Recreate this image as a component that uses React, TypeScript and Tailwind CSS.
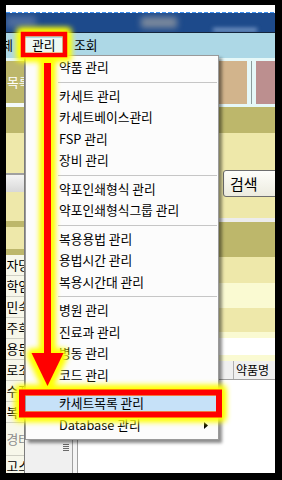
import React from "react";

const menuItems: (string | null)[] = [
  "약품 관리",
  null,
  "카세트 관리",
  "카세트베이스관리",
  "FSP 관리",
  "장비 관리",
  null,
  "약포인쇄형식 관리",
  "약포인쇄형식그룹 관리",
  null,
  "복용용법 관리",
  "용법시간 관리",
  "복용시간대 관리",
  null,
  "병원 관리",
  "진료과 관리",
  "병동 관리",
  "코드 관리",
  null,
  "카세트목록 관리",
  "Database 관리",
];

const nameRows = ["자당", "학임", "민숙", "주희", "용둔", "로조", "수진", "복구"];

function Overlay() {
  const shapes = (fill: string, stroke: string) => (
    <>
      <rect x="23" y="34" width="42" height="21" fill="none" stroke={stroke} strokeWidth="4.5" />
      <rect x="44" y="63" width="7" height="292" fill={fill} />
      <polygon points="31.5,353 63.5,353 47.5,386" fill={fill} />
      <rect x="22" y="392.5" width="197" height="22" fill="none" stroke={stroke} strokeWidth="6" />
    </>
  );
  return (
    <svg
      className="absolute left-0 top-0 pointer-events-none"
      width="282"
      height="480"
      viewBox="0 0 282 480"
    >
      <defs>
        <filter id="glow" filterUnits="userSpaceOnUse" x="0" y="0" width="282" height="480">
          <feMorphology in="SourceAlpha" operator="dilate" radius="2.5" result="d" />
          <feGaussianBlur in="d" stdDeviation="3" result="b" />
          <feFlood floodColor="#ffff00" />
          <feComposite in2="b" operator="in" result="y" />
          <feMerge>
            <feMergeNode in="y" />
            <feMergeNode in="y" />
          </feMerge>
        </filter>
        <clipPath id="outside">
          <path
            clipRule="evenodd"
            d="M0 0H282V480H0Z M25.25 36.25H62.75V52.75H25.25Z M25 395.5H216V411.5H25Z"
          />
        </clipPath>
      </defs>
      <g clipPath="url(#outside)">
        <g filter="url(#glow)">{shapes("#ff0000", "#ff0000")}</g>
      </g>
      <g>{shapes("#ff0000", "#ff0000")}</g>
    </svg>
  );
}

function Menu() {
  return (
    <div className="absolute left-[25px] top-[55px] w-[194px] border border-[#9a9a9a] bg-[#fcfcfc] pt-[1px] pb-[3px] shadow-[3px_3px_3px_rgba(0,0,0,0.45)]">
      {menuItems.map((it, i) =>
        it === null ? (
          <div key={i} className="h-[7px] flex items-center pl-[32px] pr-[1px]">
            <div className="h-px w-full bg-[#c6c6c6]" />
          </div>
        ) : (
          <div
            key={i}
            className={
              "h-[21.5px] flex items-center pl-[33px] whitespace-nowrap " +
              (it === "카세트목록 관리" ? "bg-[#c6e1f8]" : "")
            }
          >
            <span>{it}</span>
            {it === "Database 관리" && (
              <svg className="ml-auto mr-[10px]" width="4" height="7" viewBox="0 0 4 7">
                <polygon points="0,0 4,3.5 0,7" fill="#000" />
              </svg>
            )}
          </div>
        )
      )}
    </div>
  );
}

export default function App() {
  return (
    <div className="relative w-[282px] h-[480px] bg-black pt-[5px] pl-[6px] pr-[7px] pb-[7px] font-[family-name:'Noto_Sans_CJK_KR','Noto_Sans',sans-serif] text-[12.75px] leading-none text-black">
      <div className="flex flex-col w-full h-full overflow-hidden bg-white">
        {/* top strip */}
        <div className="h-[7px] bg-white shrink-0" />
        <div className="h-px shrink-0 bg-[repeating-linear-gradient(90deg,#3a8ef0_0px,#3a8ef0_4px,#ffffff_4px,#ffffff_6px)]" />
        <div className="relative h-[19px] shrink-0 bg-[#1d4a8b] overflow-hidden">
          <div className="absolute left-0 top-[3px] w-[30px] h-[12px] bg-[#4d6c9e] blur-[3px]" />
          <div className="absolute left-[135px] top-[4px] w-[36px] h-[11px] bg-[#7a889c] blur-[3px]" />
          <div className="absolute left-[207px] top-[15px] w-[44px] h-[4px] bg-[#7c9bc8] blur-[2px]" />
        </div>
        <div className="h-px shrink-0 bg-[#14253c]" />
        {/* menubar */}
        <div className="h-[25px] shrink-0 bg-[#add8e6] flex items-center whitespace-nowrap">
          <span className="ml-[-16.5px]">조제</span>
          <span className="ml-[12px] px-[7px] h-[16px] flex items-center bg-[#eef8f3]">관리</span>
          <span className="ml-[11.5px]">조회</span>
        </div>
        {/* body */}
        <div className="flex flex-1 min-h-0">
          {/* left column */}
          <div className="w-[19px] shrink-0 flex flex-col border-r border-[#7c7c7c] overflow-hidden">
            <div className="h-[3px] bg-[#e6f8f8]" />
            <div className="h-[42px] bg-[#bdb76b] flex items-center whitespace-nowrap text-white pl-[1px]">
              <span>목록</span>
            </div>
            <div className="h-[4px] bg-[#f4fafa]" />
            <div className="h-[26px] bg-[#bdb76b]" />
            <div className="h-[40px] bg-[#eee8aa]" />
            <div className="h-[2px] bg-[#a0a0a0]" />
            <div className="h-[17px] bg-[linear-gradient(#f4f4f4,#d8d8d8)]" />
            <div className="h-[30px] bg-[#eee8aa]" />
            <div className="h-[6px] bg-[#bdb76b]" />
            <div className="h-[22px] bg-[#eee8aa]" />
            <div className="h-[6px] bg-[#bdb76b]" />
            {nameRows.map((n) => (
              <div
                key={n}
                className="h-[21px] shrink-0 bg-[#f7f7ea] border-b border-[#cfcfc4] flex items-center whitespace-nowrap pl-[0.5px]"
              >
                <span>{n}</span>
              </div>
            ))}
            <div className="h-[33px] shrink-0 bg-[#f7f7ea] border-b border-[#cfcfc4] flex items-center whitespace-nowrap pl-[0.5px] text-[#8a8a8a]">
              <span>경태</span>
            </div>
            <div className="flex-1 bg-[#f7f7ea] whitespace-nowrap pt-[4px] pl-[0.5px]">
              <span>고스</span>
            </div>
          </div>
          {/* middle */}
          <div className="flex-1 flex flex-col">
            <div className="flex-1 bg-white" />
            <div className="h-[33px] flex">
              <div className="w-[35px] bg-[#f0f0f0]" />
              <div className="w-[12px] bg-[#f0f0f0] flex flex-col items-center pt-[4px] gap-[1px]">
                <div className="w-[6px] h-px bg-[#6a6a6a]" />
                <div className="w-[6px] h-px bg-[#6a6a6a]" />
                <div className="w-[6px] h-px bg-[#6a6a6a]" />
                <div className="w-[6px] h-px bg-[#6a6a6a]" />
              </div>
              <div className="w-px bg-[#a0a0a0]" />
              <div className="w-[4px] bg-[#f4f4f4]" />
              <div className="w-px bg-[#a0a0a0]" />
              <div className="flex-1 bg-white" />
            </div>
          </div>
          {/* right column */}
          <div className="w-[57px] shrink-0 flex flex-col overflow-hidden">
            <div className="h-[3px] bg-[#e6f8f8]" />
            <div className="h-[43px] flex bg-[#e6f8f8]">
              <div className="w-px" />
              <div className="w-[28px] bg-[#d2b48c]" />
              <div className="w-[4px]" />
              <div className="w-px bg-[#8c9c9c]" />
              <div className="w-[4px]" />
              <div className="flex-1 bg-[#bc8f8f]" />
            </div>
            <div className="h-[3px] bg-[#e6f8f8]" />
            <div className="h-[26px] bg-[#bdb76b]" />
            <div className="h-[85px] bg-[#eee8aa] pt-[37px] pl-[5px]">
              <div className="w-[64px] h-[27px] border border-[#6e6e6e] rounded-[3px] bg-[linear-gradient(#fefefa,#ecebdf)] flex items-center pl-[6px] text-[15px]">
                검색
              </div>
            </div>
            <div className="h-[4px] bg-[#ececec]" />
            <div className="h-[35px] bg-[#bdb76b]" />
            <div className="h-[26px] bg-[#eee8aa]" />
            <div className="h-[25px] bg-[#fafad2]" />
            <div className="h-[24px] bg-[#eee8aa]" />
            <div className="h-[6px] bg-[#fafad2]" />
            <div className="h-[17px] bg-white" />
            <div className="h-[6px] bg-[#fafad2]" />
            <div className="h-[18px] flex bg-[#f0f0f0]">
              <div className="w-[15px]" />
              <div className="w-px bg-[#b0b0b0]" />
              <div className="pl-[2px] flex items-center whitespace-nowrap text-[12px]">약품명</div>
            </div>
            <div className="h-px bg-[#a0a0a0]" />
            <div className="flex-1 bg-white" />
          </div>
        </div>
      </div>
      <Menu />
      <Overlay />
    </div>
  );
}
